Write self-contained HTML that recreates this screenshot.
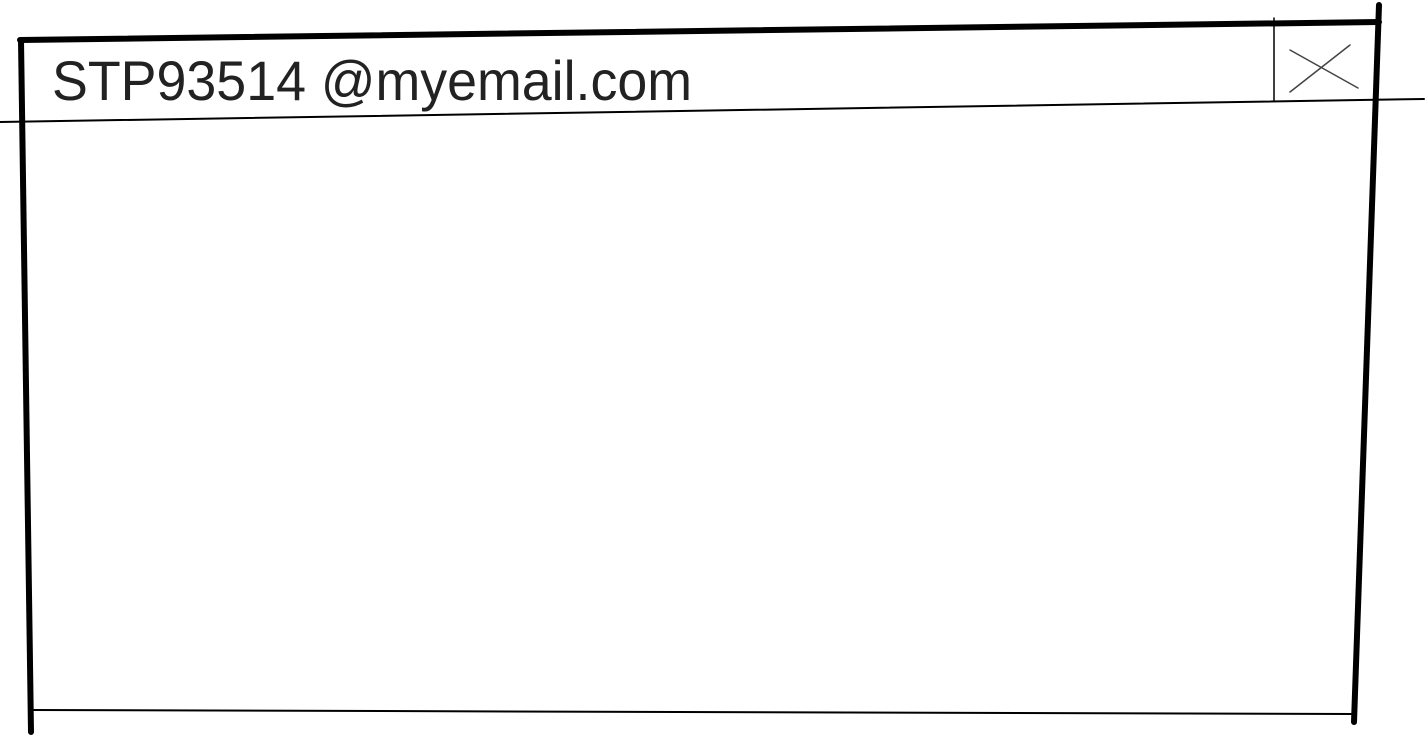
<!DOCTYPE html>
<html><head><meta charset="utf-8"><style>
html,body{margin:0;padding:0;background:#fff;width:1426px;height:737px;overflow:hidden}
svg{display:block}
</style></head><body>
<svg width="1426" height="737" viewBox="0 0 1426 737" xmlns="http://www.w3.org/2000/svg">
<g stroke="#000" stroke-linecap="round" fill="none">
<line x1="20" y1="40" x2="1379" y2="22" stroke-width="6"/>
<line x1="21" y1="40" x2="31" y2="732" stroke-width="6"/>
<line x1="1379" y1="5" x2="1354" y2="722" stroke-width="6"/>
<line x1="32" y1="710" x2="1354" y2="714" stroke-width="2"/>
<line x1="0" y1="122" x2="1424" y2="99" stroke-width="2"/>
<line x1="1274" y1="18" x2="1274" y2="101" stroke-width="1.5"/>
<line x1="1290" y1="92" x2="1350" y2="45" stroke-width="1.5" stroke="#444"/>
<line x1="1290" y1="50" x2="1358" y2="88" stroke-width="1.5" stroke="#444"/>
</g>
<text x="52" y="100" font-family="Liberation Sans, sans-serif" font-size="56" fill="#222" textLength="640" lengthAdjust="spacingAndGlyphs">STP93514 @myemail.com</text>
</svg>
</body></html>
